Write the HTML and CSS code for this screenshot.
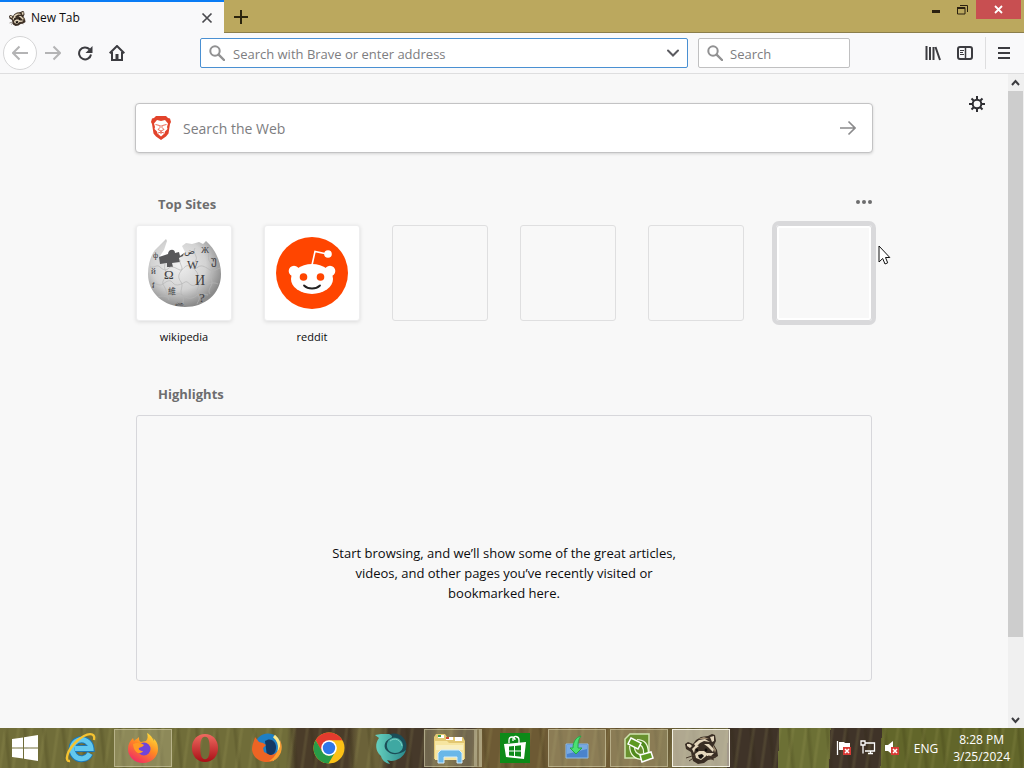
FILE: index.html
```
<!DOCTYPE html>
<html lang="en">
<head>
  <title>New Tab</title>
  <meta charset="utf-8">
  <meta name="viewport" content="width=device-width, initial-scale=1">
  <link rel="stylesheet" href="styles.css">
</head>

<body>
  <svg class="defs" width="0" height="0">
    <symbol id="raccoon" viewBox="0 0 36 32">
      <path fill="#3a2e24" d="M2 12l3-2 5 2 3-4 5-3 7-1 4-2 3 1 1 6-2 4 3 5 1 6-5 3-5 1-4 3-6 1-5-3-1-4-1-5-5-3z"/>
      <path fill="#e4d6bc" d="M4 12l3 0 2 2-2 2-3-2zM27 5l4-1 0 5-2 1zM11 12l5-4 6-1 5 3-6-1-4 2-4 4zM9 17l4-4 3 1-4 3-1 4zM21 12l5 0 5 5-1 3-5-5z"/>
      <path fill="#a08c70" d="M15 7l6-2 5 2-5 0zM30 13l3 5-1 3-2-6z"/>
      <path fill="#e4d6bc" d="M12 22l4-3 5 0 4 3-3 3-4 3-5-2zM24 21l7 0-3 3-4 0z"/>
      <circle cx="14" cy="18" r="1.2" fill="#0f0c0a"/><circle cx="23" cy="18" r="1.4" fill="#0f0c0a"/>
      <path fill="#17120f" d="M15 23l4-1 2 2-3 3-2-1z"/>
      <path stroke="#4a3b2e" fill="none" d="M12 23l-9 3M12 25l-6 4M24 25l7 3M25 24l8 1"/>
    </symbol>
    <symbol id="glass" viewBox="0 0 16 16">
      <circle cx="6" cy="6" r="4.7" fill="none" stroke="#919192" stroke-width="2"/>
      <path d="M9.6 9.6 15 15" stroke="#919192" stroke-width="2.4" stroke-linecap="round"/>
    </symbol>
  </svg>

  <header class="titlebar">
    <div class="tab">
      <svg width="18" height="16"><use href="#raccoon"/></svg>
      <span class="tabtitle">New Tab</span>
      <button class="btn" aria-label="Close tab">
        <svg width="12" height="12" viewBox="0 0 12 12"><path d="M1.5 1.5l9 9M10.5 1.5l-9 9" stroke="#4a4a4f" stroke-width="1.7"/></svg>
      </button>
    </div>
    <button class="btn newtab" aria-label="New tab">
      <svg width="14" height="14" viewBox="0 0 14 14"><path d="M7 0v14M0 7h14" stroke="#2b240d" stroke-width="2"/></svg>
    </button>
    <div class="winbuttons">
      <button class="btn winbtn" aria-label="Minimize"><svg width="10" height="6"><path d="M1 4.5h8" stroke="#2b2110" stroke-width="3"/></svg></button>
      <button class="btn winbtn" aria-label="Restore"><svg width="11" height="10"><path d="M.5 2.5h7.5v6.5H.5zM3 .5h7.5v6.5" fill="none" stroke="#2b2110"/><path d="M0 3h8" stroke="#2b2110" stroke-width="2"/></svg></button>
      <button class="btn winbtn close" aria-label="Close"><svg width="9" height="9"><path d="M1 1l7 7M8 1 1 8" stroke="#fff" stroke-width="1.8"/></svg></button>
    </div>
  </header>

  <nav class="toolbar">
    <button class="btn back" aria-label="Back"><svg width="16" height="16" viewBox="0 0 16 16"><path d="M16 8H1M7.5 1.5 1 8l6.5 6.5" class="line pale"/></svg></button>
    <button class="btn tool" aria-label="Forward"><svg width="16" height="16" viewBox="0 0 16 16"><path d="M0 8h15M8.5 1.5 15 8l-6.5 6.5" class="line pale"/></svg></button>
    <button class="btn tool" aria-label="Reload"><svg width="16" height="16" viewBox="0 0 16 16"><path d="M12.5 4.3A6 6 0 1 0 14 9.5" class="line"/><path d="M15.5 1v7H8.5z" fill="#3c3c40"/></svg></button>
    <button class="btn tool" aria-label="Home"><svg width="16" height="16" viewBox="0 0 16 16"><path d="M.7 8.3 8 1l7.3 7.3M3 7v8h10V7M3 15h10" class="line"/><path d="M6.5 9h3v6h-3z" fill="#3c3c40"/></svg></button>
    <div class="spacer"></div>
    <div class="field urlbar">
      <svg width="16" height="16"><use href="#glass"/></svg>
      <input type="text" aria-label="Address" placeholder="Search with Brave or enter address">
      <button class="btn" aria-label="Show history"><svg width="14" height="14" viewBox="0 0 14 14"><path d="M2 4.5 7 9.5l5-5" fill="none" stroke="#5b5b60" stroke-width="2" stroke-linecap="round"/></svg></button>
    </div>
    <div class="field searchbar">
      <svg width="16" height="16"><use href="#glass"/></svg>
      <input type="text" aria-label="Search" placeholder="Search">
    </div>
    <div class="spacer"></div>
    <button class="btn tool" aria-label="Library"><svg width="16" height="16" viewBox="0 0 16 16"><path d="M1.5 1v14M5 2v13M8.5 2v13M10.5 2l4.5 13" fill="none" stroke="#3c3c40" stroke-width="2"/></svg></button>
    <button class="btn tool" aria-label="Sidebars"><svg width="16" height="16" viewBox="0 0 16 16"><rect x="1" y="2" width="14" height="12" rx="2" class="line"/><path d="M8.5 2v12" stroke="#3c3c40" stroke-width="1.5"/><path d="M3 5.5h4M3 7.5h3M3 9.5h4" stroke="#3c3c40"/></svg></button>
    <button class="btn menu" aria-label="Menu"><svg width="12" height="12"><path d="M0 1h12M0 6h12M0 11h12" stroke="#3c3c40" stroke-width="2"/></svg></button>
  </nav>

  <div class="view">
    <main class="page">
      <button class="btn gear" aria-label="Settings">
        <svg width="16" height="16" viewBox="-8 -8 16 16"><circle r="4.3" fill="none" stroke="#2e2e33" stroke-width="2"/><path d="M0-8v3.5M0 4.5V8M-8 0h3.5M4.5 0H8M-5.5-5.5l2.3 2.3M3.2 3.2l2.3 2.3M-5.5 5.5l2.3-2.3M3.2-3.2l2.3-2.3" stroke="#2e2e33" stroke-width="2"/></svg>
      </button>

      <form class="websearch">
        <svg width="22" height="26" viewBox="0 0 22 26">
          <path fill="#e2432b" d="M6 1h10l2 2 2 .5 1 3.5-1 2-1.500 9.5-2.500 3-5 3.500-5-3.500-2.500-3L2 9 1 7l1-3.500L4 3z"/>
          <path fill="#fff" d="M7 5l4 1 4-1 3 3.500-1 3.500.5 2-2.500 2.500-.5 2-3.500 3-3.500-3-.5-2L4.500 14l.5-2-1-3.500z"/>
          <path fill="none" stroke="#e2432b" stroke-width=".8" d="M5.500 9.500l4 1M16.500 9.500l-4 1M10 10v2.500L8 14.500l3 1.500 3-1.500-2-2V10M8 18l3-1 3 1M11 16v3"/>
        </svg>
        <input type="text" aria-label="Search the Web" placeholder="Search the Web">
        <button type="button" class="btn" aria-label="Go"><svg width="16" height="16" viewBox="0 0 16 16"><path d="M0 8h15M8.5 1.5 15 8l-6.5 6.5" fill="none" stroke="#8a8a8c" stroke-width="1.6"/></svg></button>
      </form>

      <section class="topsites">
        <div class="heading">
          <h2>Top Sites</h2>
          <button class="btn more" aria-label="More"><svg width="16" height="4"><circle cx="2" cy="2" r="2"/><circle cx="8" cy="2" r="2"/><circle cx="14" cy="2" r="2"/></svg></button>
        </div>
        <div class="tiles">
          <a class="site" href="#wikipedia">
            <span class="tile full">
              <svg width="74" height="74" viewBox="0 0 74 74">
                <defs><radialGradient id="globe" cx=".42" cy=".38" r=".62"><stop offset="0" stop-color="#f0f0f0"/><stop offset=".6" stop-color="#d2d2d2"/><stop offset="1" stop-color="#8b8b8b"/></radialGradient></defs>
                <path fill="url(#globe)" d="M8 14l6-6 5-5 1 2-3 9-4 6 3 5 16-1 6-8-3-6 4-3 6 1 7-2 4 2 3-3C68 13 74 25 74 38 74 58 58 71 38 71 17 71 1 57 1 38 1 28 4 19 8 14z"/>
                <path fill="#58585a" d="M12 21l9-3c0-5 7-6 7-1l4-1 1 4 4-3-1 3-4 2 1 4-8 1 1 4-6 0v-4l-7 1z"/>
                <g fill="none" stroke="#b4b4b4" stroke-width=".7">
                  <path d="M3 31c5 1 7-3 10 0s6 4 9 1 8 1 11 2 5-6 9-4 5 4 9 1 9 1 12 3 7-1 10-2M4 48c5-2 8 3 12 0s7-5 10-1 9 1 12-1 6 6 10 3 9 2 12 0 7-3 11-1M11 61c6-3 9 2 14-1s8-3 12 0 8 3 12 0 8-2 12-1"/>
                  <path d="M18 28c-2 6 3 8 1 12s-5 6-2 10 2 9 5 14M33 24c-1 4 4 7 1 11s-3 7 0 11-2 9 1 13 0 8 1 10M48 12c-3 5 3 8 1 12s-4 7 0 11 0 8 2 12-3 8 0 12 0 6-1 9M61 13c2 5-1 9 2 13s3 8 1 12 3 7 0 12-2 6-1 8"/>
                </g>
                <g class="globetext">
                  <text x="17" y="43" font-size="13">Ω</text><text x="40" y="33" font-size="12">W</text><text x="48" y="49" font-size="14">И</text><text x="21" y="58" font-size="8" class="cjk">維</text>
                  <text x="52" y="66" font-size="13">?</text><text x="4" y="38" font-size="9">й</text><text x="5" y="52" font-size="8">វ</text><text x="37" y="18" font-size="9">ض</text><text x="54" y="17" font-size="9">Ж</text><text x="64" y="28" font-size="11">უ</text><text x="6" y="22" font-size="8">ф</text><text x="28" y="70" font-size="7">ண</text>
                </g>
              </svg>
            </span>
            <span class="name">wikipedia</span>
          </a>
          <a class="site" href="#reddit">
            <span class="tile full">
              <svg width="72" height="72" viewBox="0 0 72 72">
                <circle cx="36" cy="36" r="36" fill="#ff4500"/>
                <path d="M36 28l3-13.5 12 2.500" fill="none" stroke="#fff" stroke-width="1.6"/>
                <circle cx="52" cy="17" r="3.8" fill="#fff"/><circle cx="18" cy="34" r="5.3" fill="#fff"/><circle cx="54" cy="34" r="5.3" fill="#fff"/>
                <ellipse cx="36" cy="42" rx="21" ry="15" fill="#fff"/>
                <circle cx="27.5" cy="40" r="3.8" fill="#ff4500"/><circle cx="44.5" cy="40" r="3.8" fill="#ff4500"/>
                <path d="M28 48.5c4 4 12 4 16 0" fill="none" stroke="#222" stroke-width="1.8" stroke-linecap="round"/>
              </svg>
            </span>
            <span class="name">reddit</span>
          </a>
          <div class="tile"></div>
          <div class="tile"></div>
          <div class="tile"></div>
          <div class="tile hovered">
            <svg class="pointer" width="13" height="20" viewBox="0 0 13 20"><path d="M1 1v16l3.7-3.5L7 19l2.7-1.2L7.5 12.5h4.3z" fill="#fff" stroke="#111"/></svg>
          </div>
        </div>
      </section>

      <section class="highlights">
        <h2>Highlights</h2>
        <div class="empty"><p>Start browsing, and we’ll show some of the great articles, videos, and other pages you’ve recently visited or bookmarked here.</p></div>
      </section>
    </main>
    <div class="scrollbar">
      <svg width="15" height="17"><path d="M4 11l3.5-4 3.5 4" class="line"/></svg>
      <div class="track"><div class="thumb"></div></div>
      <svg width="15" height="17"><path d="M4 7l3.5 4L11 7" class="line"/></svg>
    </div>
  </div>

  <footer class="taskbar">
    <button class="btn start" aria-label="Start"><svg width="26" height="26" viewBox="0 0 26 26"><path fill="#fff" d="M0 4l11-1.6V12.5H0zM12 2.2 26 0v12.5H12zM0 13.5h11v10.1L0 22zM12 13.5h14V26l-14-2.2z"/></svg></button>
    <button class="btn task" aria-label="Internet Explorer">
      <svg width="32" height="32" viewBox="0 0 32 32"><path d="M25 21.5A9.5 9.5 0 1 1 26 16.500H10" fill="none" stroke="#1c78b8" stroke-width="7"/><path d="M25 21.5A9.5 9.5 0 1 1 26 16.500H10" fill="none" stroke="#62c8ee" stroke-width="5"/><path d="M5 29C-1 30 2 18 12 9S31 0 29 8" fill="none" stroke="#f5c331" stroke-width="2.4"/></svg>
    </button>
    <button class="btn task open" aria-label="Firefox">
      <svg width="32" height="32" viewBox="0 0 32 32"><defs><linearGradient id="ff" x1=".8" y1="0" x2=".2" y2="1"><stop offset="0" stop-color="#ffe23c"/><stop offset=".45" stop-color="#ff8a22"/><stop offset="1" stop-color="#f0246a"/></linearGradient></defs><path fill="url(#ff)" d="M20 1c5 3 6 6 7 8 0-1 0-2-1-3 4 3 5 7 5 11a15 14 0 0 1-30 0c0-5 2-8 5-11l1 3c2-2 3-2 5-4 0 3 0 4 2 5l5-1c2-2 2-5 1-8z"/><circle cx="17" cy="17" r="6.5" fill="#7144d8"/><path fill="#ff9a24" d="M6 12c4-2 9-1 11 1-1 2-4 2-5 3s1 3 4 3c-2 4-9 3-10-7z"/></svg>
    </button>
    <button class="btn task" aria-label="Opera">
      <svg width="28" height="30" viewBox="0 0 30 32"><defs><linearGradient id="op" x2="0" y2="1"><stop offset="0" stop-color="#ef6a60"/><stop offset="1" stop-color="#a90f16"/></linearGradient></defs><path fill="url(#op)" fill-rule="evenodd" d="M15 1c8 0 14 6 14 15s-6 15-14 15S1 25 1 16 7 1 15 1zm0 3c-4 0-5 5-5 12s1 12 5 12 5-5 5-12-1-12-5-12z"/></svg>
    </button>
    <button class="btn task" aria-label="Firefox classic">
      <svg width="32" height="32" viewBox="0 0 32 32"><circle cx="17" cy="15" r="13.5" fill="#1f7fc4"/><path fill="#123763" d="M14 9c5-4 11 0 11 6s-3 9-9 9z"/><path d="M23 4c8 7 7 19-2 24" fill="none" stroke="#ffe98a" stroke-width="3"/><path fill="#ec6424" d="M4 5l4 5 4 1 3 2-3 3 1 4 4 2c2 2 6 1 9-2 3-3 4-7 3-12 4 10-1 22-13 22C8 30 2 25 1 18c0-6 2-8 3-13z"/><path fill="#f8a030" d="M26 20c2-2 4-5 3-12 3 6 2 13-2 17-3 3-6 4-9 4 4-2 6-5 8-9z"/></svg>
    </button>
    <button class="btn task" aria-label="Chrome">
      <svg width="32" height="32" viewBox="0 0 32 32"><circle cx="16" cy="16" r="15.5" fill="#fbc116"/><path fill="#e33b2e" d="M2.6 8.2A15.5 15.5 0 0 1 29.4 8.2H16L9.2 20z"/><path fill="#289b48" d="M2.6 8.2 9.5 20l6.5 4 6.2-4-6.7 11.5A15.5 15.5 0 0 1 2.6 8.2z"/><circle cx="16" cy="16" r="7.8" fill="#fff"/><circle cx="16" cy="16" r="6.2" fill="#2f77e8"/></svg>
    </button>
    <button class="btn task" aria-label="Basilisk">
      <svg width="32" height="32" viewBox="0 0 32 32"><defs><linearGradient id="bas" x1="0" x2="1"><stop offset="0" stop-color="#68d3c0"/><stop offset="1" stop-color="#2a8a8c"/></linearGradient></defs><circle cx="19" cy="14" r="12.5" fill="#1b4e58"/><path fill="url(#bas)" d="M0 3l6-1h8c3 1 4 3 2 4-6 2-8 8-5 12 5 6 14 5 20 0-2 7-9 11-15 11l-4-1 3 4c-5-1-8-4-9-8C0 19 0 11 4 6z"/><path fill="#3fa8a2" d="M12 12c1-7 11-9 15-2 3 6-1 11-7 11-5 0-9-4-8-9z"/><path d="M15 9c5-4 11-1 12 5" fill="none" stroke="#7fd3c6"/></svg>
    </button>
    <button class="btn task open stacked" aria-label="File Explorer">
      <svg width="34" height="32" viewBox="0 0 34 32"><path fill="#e3c873" d="M1 5l2-3h9l2 3h16l2 4v18H1z"/><path fill="#fff" d="M5 3h6v3H5zM13 5h7v3h-7zM22 5h7v4h-7z"/><path fill="#3ba24b" d="M5 3h3v2H5z"/><path fill="#ce4a35" d="M13 5h3v2h-3z"/><path fill="#f6e5a0" d="M2 9h12l2 2h15v17H2z"/><path fill="#f9efc0" d="M3 13h27v5H3z"/><path fill="#69b7e8" stroke="#d4edfa" d="M5 31V21l3-3h18l3 3v10h-5v-6H11v6z"/></svg>
    </button>
    <button class="btn task" aria-label="Store">
      <svg width="30" height="30" viewBox="0 0 30 30"><path fill="#0d8a18" d="M0 0h30v30H0z"/><path d="M9 10V7c0-4 6-4 6 0M13 8V6c0-4 6-3 6 1v3" fill="none" stroke="#fff" stroke-width="1.3"/><path fill="#fff" d="M4 11l22-2-2 17-18-2z"/><path fill="#0d8a18" d="M9 13.5l5-.5v4.5H9zM15 13l6-.7v5.2h-6zM9 18.5h5V23l-5-.5zM15 18.5h6v5.3l-6-.7z"/></svg>
    </button>
    <button class="btn task open" aria-label="Downloads">
      <svg width="26" height="28" viewBox="0 0 26 28"><path fill="#4a83cd" stroke="#8fbbe6" d="M2 10h22v14H2z"/><path fill="#78aae2" d="M3 11h20v4L3 20z"/><path fill="#4be072" stroke="#27a848" d="M17 2c-5 1-8 6-8 12H6l6 6 6-6h-4c0-5 0-8 3-12z"/></svg>
    </button>
    <button class="btn task open" aria-label="Sync">
      <svg width="30" height="30" viewBox="0 0 30 30"><path fill="#69912f" stroke="#cfe3ae" stroke-width="1.5" d="M1 25V6l5-5h19v24z"/><path d="M8 13c0 8 5 11 10 11M13 9c7 0 9 5 9 11" fill="none" stroke="#eef8dc" stroke-width="6"/><path d="M8 13c0 8 5 11 10 11M13 9c7 0 9 5 9 11" fill="none" stroke="#4f8a1c" stroke-width="3.5"/><path fill="#5d9a22" stroke="#fff" stroke-width="1.5" d="M7 5l10 5-3 6-10-5zM16 22l11-3 2 6-11 4z"/></svg>
    </button>
    <button class="btn task open active" aria-label="New Tab"><svg width="36" height="32"><use href="#raccoon"/></svg></button>

    <div class="tray">
      <button class="btn" aria-label="Action Center"><svg width="16" height="16" viewBox="0 0 16 16"><path d="M1.5 1v14" stroke="#fff" stroke-width="1.3"/><path fill="#fff" d="M3 2h5l1 1h5v7H3z"/><path fill="#d83a35" d="M7 7h8v8H7z"/><path d="M9 9l4 4M13 9l-4 4" stroke="#fff" stroke-width="1.5"/></svg></button>
      <button class="btn" aria-label="Network"><svg width="16" height="16" viewBox="0 0 16 16"><path fill="none" stroke="#fff" stroke-width="1.3" d="M5 3h9.5v8H5M8 13.5h5M10.5 11v3M1 1h4v4H1zM3 5v8.5"/></svg></button>
      <button class="btn" aria-label="Volume"><svg width="16" height="16" viewBox="0 0 16 16"><path fill="#fff" d="M1 5h3l5-4v14l-5-4H1z"/><path fill="#d83a35" d="M7 7h8v8H7z"/><path d="M9 9l4 4M13 9l-4 4" stroke="#fff" stroke-width="1.5"/></svg></button>
      <button class="btn lang">ENG</button>
      <button class="btn clock">8:28 PM<br>3/25/2024</button>
    </div>
  </footer>
</body>

</html>
```

FILE: styles.css
```
html, body {
  height: 100%;
}
body {
  margin: 0;
  display: flex;
  flex-direction: column;
  overflow: hidden;
  font-family: "Open Sans", "Noto Sans", sans-serif;
  font-size: 12px;
  color: #0c0c0d;
  background-color: #f9f9fa;
}
svg {
  display: block;
  flex: none;
}
.defs {
  position: absolute;
}
.btn {
  display: flex;
  align-items: center;
  justify-content: center;
  flex: none;
  margin: 0;
  padding: 0;
  border: none;
  background: none;
  color: inherit;
  font: inherit;
}
input {
  flex: 1;
  min-width: 0;
  padding: 0;
  border: none;
  outline: none;
  background: none;
  font: inherit;
}
input::placeholder {
  color: #7d7d7f;
  opacity: 1;
}
h2 {
  margin: 0;
  font-size: 13px;
  line-height: 20px;
  color: #6d6d6e;
}
.line {
  fill: none;
  stroke: #3c3c40;
  stroke-width: 2;
}
.pale {
  stroke: #b4b4b5;
}

/* title bar */
.titlebar {
  display: flex;
  flex: none;
  height: 33px;
  background-color: #bba85e;
  box-shadow: inset 0 -1px #8b7e4b;
}
.tab {
  display: flex;
  align-items: center;
  box-sizing: border-box;
  width: 224px;
  padding: 0 11px 0 8px;
  border-top: 2px solid #0a7cf5;
  background-color: #f9f9fa;
}
.tabtitle {
  flex: 1;
  padding-left: 5px;
}
.newtab {
  width: 34px;
}
.winbuttons {
  display: flex;
  align-items: flex-start;
  margin-left: auto;
  padding-right: 3px;
}
.winbtn {
  width: 26px;
  height: 19px;
}
.close {
  width: 45px;
  margin-left: 1px;
  background-color: #c84f51;
}

/* toolbar */
.toolbar {
  display: flex;
  flex: none;
  align-items: center;
  height: 40px;
  padding-left: 3px;
  border-bottom: 1px solid #dededf;
}
.back {
  box-sizing: border-box;
  width: 34px;
  height: 34px;
  border: 1px solid #d5d5d6;
  border-radius: 50%;
  background-color: #fff;
}
.tool {
  width: 32px;
  height: 32px;
}
.spacer {
  width: 67px;
}
.field {
  display: flex;
  align-items: center;
  gap: 8px;
  box-sizing: border-box;
  height: 30px;
  padding: 0 7px 0 8px;
  border: 1px solid #c0c0c1;
  border-radius: 2px;
  background-color: #fff;
  font-size: 13px;
}
.field input {
  padding-top: 2px;
}
.urlbar {
  flex: 1;
  border-color: #4a90d2;
}
.searchbar {
  width: 152px;
  margin-left: 10px;
  gap: 7px;
}
.menu {
  box-sizing: border-box;
  width: 39px;
  height: 32px;
  margin-left: 4px;
  padding-right: 2px;
  border-left: 1px solid #dededf;
}

/* new tab page */
.view {
  display: flex;
  flex: 1;
  min-height: 0;
}
.page {
  position: relative;
  flex: 1;
  padding-top: 29px;
  background-color: #f8f8f8;
}
.gear {
  position: absolute;
  top: 22px;
  right: 23px;
}
.websearch, .topsites, .highlights {
  width: 736px;
  margin: 0 auto;
}
.websearch {
  display: flex;
  align-items: center;
  gap: 11px;
  box-sizing: border-box;
  width: 738px;
  height: 50px;
  padding: 0 16px 0 14px;
  border: 1px solid #c3c3c4;
  border-radius: 4px;
  background-color: #fff;
  box-shadow: 0 1px 3px rgba(0,0,0,.15);
  font-size: 14px;
}
.topsites {
  padding-top: 41px;
}
.heading {
  display: flex;
  justify-content: space-between;
  align-items: center;
  padding-left: 22px;
}
.more {
  fill: #6d6d6e;
  padding-bottom: 4px;
}
.tiles {
  display: flex;
  justify-content: space-between;
  margin-top: 11px;
}
.site {
  color: inherit;
  text-align: center;
  text-decoration: none;
}
.name {
  display: block;
  padding-top: 8px;
  font-size: 11px;
  line-height: 16px;
}
.tile {
  display: flex;
  align-items: center;
  justify-content: center;
  box-sizing: border-box;
  width: 96px;
  height: 96px;
  border: 1px solid #dfdfe0;
  border-radius: 3px;
}
.full {
  border-color: #eeeeef;
  background-color: #fff;
  box-shadow: 0 1px 4px rgba(0,0,0,.12);
}
.hovered {
  position: relative;
  border-color: #d9d9db;
  box-shadow: 0 0 0 4px #d9d9db, inset 0 0 0 2px #fff;
}
.pointer {
  position: absolute;
  left: 101px;
  top: 19px;
}
.globetext {
  fill: #3c3c3e;
  font-family: "Liberation Serif", "DejaVu Sans", serif;
}
.cjk {
  font-family: "Noto Sans CJK TC", sans-serif;
}
.highlights {
  padding-top: 39px;
}
.highlights h2 {
  padding-left: 22px;
}
.empty {
  display: flex;
  align-items: center;
  justify-content: center;
  box-sizing: border-box;
  height: 266px;
  margin-top: 11px;
  padding-top: 50px;
  border: 1px solid #d7d7db;
  border-radius: 3px;
}
.empty p {
  width: 350px;
  margin: 0;
  font-size: 13px;
  line-height: 20px;
  text-align: center;
}

/* page scrollbar */
.scrollbar {
  display: flex;
  flex-direction: column;
  width: 16px;
  background-color: #f0f0f0;
}
.track {
  flex: 1;
}
.thumb {
  width: 15px;
  height: 88%;
  background-color: #cdcdcd;
}

/* taskbar */
.taskbar {
  display: flex;
  flex: none;
  height: 40px;
  color: #fff;
  background:
    repeating-linear-gradient(98deg, transparent 0 3px, rgba(190,185,110,.12) 5px 6px, transparent 8px 13px),
    repeating-linear-gradient(84deg, transparent 0 7px, rgba(35,30,5,.14) 9px 10px, transparent 13px 19px),
    linear-gradient(92deg, #706d39 0 28%, #4a3c29 29% 34%, #6b6239 35% 37%, #46392a 38% 42%, #64552f 43% 44%, #46392a 45% 46%, #6d5a34 47% 64%, #66603a 67% 71%, #3f3328 71% 76%, #6c7035 76% 81%, #3f3328 81% 86%, #62662a 86%);
}
.start {
  width: 50px;
}
.task {
  box-sizing: border-box;
  width: 58px;
  height: 38px;
  margin: 1px 2px;
}
.open {
  border: 1px solid rgba(225,220,185,.5);
  background-color: rgba(195,190,150,.35);
}
.stacked {
  border-right: 8px double rgba(225,220,185,.4);
}
.active {
  border-color: #f3f0e3;
  background-color: rgba(215,208,190,.65);
}
.tray {
  display: flex;
  gap: 8px;
  margin-left: auto;
  padding-right: 14px;
}
.lang {
  margin: 0 7px 0 6px;
}
.clock {
  line-height: 17px;
}
```
